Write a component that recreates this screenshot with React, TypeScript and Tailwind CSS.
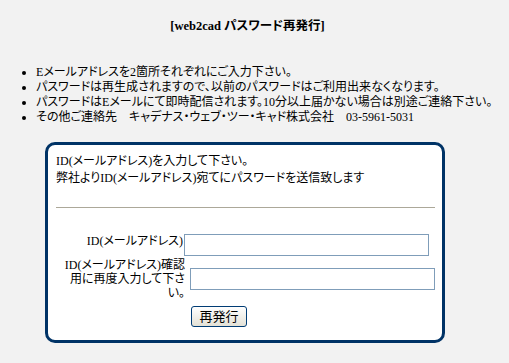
const font = {
  fontFamily: '"Liberation Serif", "Noto Sans CJK JP", serif',
};

export default function App() {
  return (
    <div
      style={font}
      className="min-h-[363px] bg-[#f2f2f2] pt-[18px] text-[12px] text-black [font-feature-settings:'palt']"
    >
      <h1 className="pr-[14px] text-center text-[12.5px] font-bold leading-[16px]">[web2cad パスワード再発行]</h1>
      <ul className="mt-[31px] list-disc whitespace-nowrap pl-[36px] leading-[15px]">
        <li>Eメールアドレスを2箇所それぞれにご入力下さい。</li>
        <li>パスワードは再生成されますので、以前のパスワードはご利用出来なくなります。</li>
        <li>パスワードはEメールにて即時配信されます。10分以上届かない場合は別途ご連絡下さい。</li>
        <li>その他ご連絡先　キャデナス・ウェブ・ツー・キャド株式会社　03-5961-5031</li>
      </ul>
      <div className="ml-[45px] mt-[17px] h-[201px] w-[400px] rounded-[10px] border-[3px] border-[#003366] bg-white">
        <div className="pl-[8px] pt-[8px] leading-[17px]">
          <p>ID(メールアドレス)を入力して下さい。</p>
          <p>弊社よりID(メールアドレス)宛てにパスワードを送信致します</p>
        </div>
        <div className="ml-[8px] mr-[7px] mt-[20px] h-px bg-[#aca899]" />
        <div className="mt-[26px] flex items-start">
          <label className="w-[135px] whitespace-nowrap text-right leading-[14px]">ID(メールアドレス)</label>
          <input className="ml-px h-[22px] w-[245px] border border-[#7f9db9] bg-white" />
        </div>
        <div className="mt-[2px] flex items-center">
          <label className="w-[137px] whitespace-nowrap text-right leading-[14px]">
            ID(メールアドレス)確認
            <br />
            用に再度入力して下さ
            <br />
            い。
          </label>
          <input className="ml-[5px] h-[22px] w-[245px] border border-[#7f9db9] bg-white" />
        </div>
        <button className="ml-[143px] mt-[6px] h-[21px] w-[56px] rounded-[3px] border border-[#003c74] bg-gradient-to-b from-white to-[#e3e1d6] text-[13px] leading-[19px]">
          再発行
        </button>
      </div>
    </div>
  );
}
